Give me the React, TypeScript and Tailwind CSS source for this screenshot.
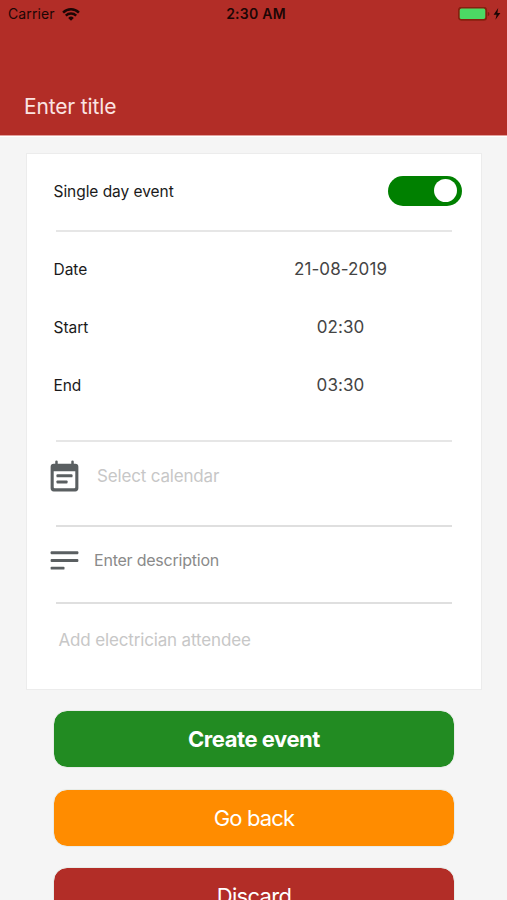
import clsx from "clsx";
import { useState } from "react";

const WifiIcon = () => (
  <svg className="h-[13px] w-[18px]" viewBox="0 0 18 13" fill="none">
    <path d="M1.1 4.6a11.2 11.2 0 0 1 15.8 0" stroke="#1c0605" strokeWidth="2.5" />
    <path d="M3.8 7.6a7.4 7.4 0 0 1 10.4 0" stroke="#1c0605" strokeWidth="2.4" />
    <path d="M6.2 9.9a4 4 0 0 1 5.6 0L9 12.7z" fill="#1c0605" />
  </svg>
);

const BatteryIcon = () => (
  <svg className="h-[14px] w-[43px]" viewBox="0 0 43 14">
    <rect x="0.8" y="0.6" width="27.4" height="12.2" rx="2.6" fill="#4cd964" stroke="#86200f" strokeWidth="1.8" />
    <path d="M29.8 5v4c1.2-.4 1.6-1.2 1.6-2s-.4-1.6-1.6-2z" fill="#7c1b12" />
    <path d="M40.2 1 35.6 7.8h3l-1.2 5L42.4 6h-3z" fill="#1c0605" />
  </svg>
);

const CalendarIcon = () => (
  <svg className="mt-px h-[37px] w-[37px] shrink-0" viewBox="0 0 24 24" fill="#5a5f61">
    <path
      fillRule="evenodd"
      d="M6 1.7a.8.8 0 0 1 1.6 0V3h8.8V1.7a.8.8 0 0 1 1.6 0V3h1a2 2 0 0 1 2 2v14a2 2 0 0 1-2 2H5a2 2 0 0 1-2-2V5a2 2 0 0 1 2-2h1zM5 8v10.3a.7.7 0 0 0 .7.7h12.6a.7.7 0 0 0 .7-.7V8z"
    />
    <rect x="6.8" y="9.9" width="10.4" height="2" rx="0.6" />
    <rect x="6.8" y="13.9" width="7.2" height="2" rx="0.6" />
  </svg>
);

const NotesIcon = () => (
  <svg className="h-[37px] w-[37px] shrink-0" viewBox="0 0 24 24" fill="#5a5f61">
    <rect x="3" y="6" width="18" height="1.9" rx="0.6" />
    <rect x="3" y="11" width="18" height="1.9" rx="0.6" />
    <rect x="3" y="16" width="9" height="1.9" rx="0.6" />
  </svg>
);

const StatusBar = () => (
  <div className="grid h-7 grid-cols-3 items-center pr-[6px] pl-2 text-sm text-[#1c0605]">
    <div className="flex items-center gap-[7px]">
      <span className="tracking-[0.1px]">Carrier</span>
      <WifiIcon />
    </div>
    <span className="pl-[3px] text-center font-semibold tracking-[0.25px]">2:30 AM</span>
    <div className="flex justify-end">
      <BatteryIcon />
    </div>
  </div>
);

const Divider = ({ thin = false }: { thin?: boolean }) => (
  <div className={clsx("mx-[29px] h-[2px]", thin ? "bg-[#dfdfdf]" : "bg-[#e6e6e6]")} />
);

interface FieldRowProps {
  label: string;
  value: string;
}

const FieldRow = ({ label, value }: FieldRowProps) => (
  <div className="flex h-[58px] items-center pl-[26.5px]">
    <span className="w-[173.5px] text-[15.5px] tracking-[-0.05px]">{label}</span>
    <span className="w-[227px] text-center text-[17px] tracking-[0.1px] text-[#444]">{value}</span>
  </div>
);

const fields: FieldRowProps[] = [
  { label: "Date", value: "21-08-2019" },
  { label: "Start", value: "02:30" },
  { label: "End", value: "03:30" },
];

const buttons = [
  { label: "Create event", style: "bg-[#228b22] font-bold tracking-[-0.45px]" },
  { label: "Go back", style: "bg-[#ff8c00] tracking-[-0.85px]" },
  { label: "Discard", style: "bg-[#b22d27] tracking-[-0.7px]" },
];

const App = () => {
  const [singleDay, setSingleDay] = useState(true);

  return (
    <div className="h-[900px] w-[507px] overflow-hidden bg-[#f5f5f5] font-['Inter',sans-serif] text-[#1a1a1a]">
      <header className="flex h-[136px] flex-col justify-between border-b border-[#e3a19d] bg-[#b22d27] shadow-[0_1px_0_#fff]">
        <StatusBar />
        <h1 className="pb-[14px] pl-6 text-[21px] leading-[28px] tracking-[-0.15px] text-[#fbe4e2]">
          Enter title
        </h1>
      </header>

      <main className="mt-[17px] mr-[25px] ml-[26px] border border-[#ececec] bg-white">
        <div className="flex h-[76px] items-center justify-between pr-[19px] pl-[26.5px]">
          <span className="text-[15.5px] tracking-[-0.05px]">Single day event</span>
          <button
            className={clsx(
              "mb-[3px] flex h-[30px] w-[74px] items-center rounded-full px-[5px]",
              singleDay ? "justify-end bg-[#008000]" : "justify-start bg-gray-300"
            )}
            onClick={() => setSingleDay(!singleDay)}
          >
            <span className="h-[23px] w-[23px] rounded-full bg-white" />
          </button>
        </div>
        <Divider />
        <div className="h-[208px] pt-[9px]">
          {fields.map((field) => (
            <FieldRow key={field.label} {...field} />
          ))}
        </div>
        <Divider />
        <div className="flex h-[83px] items-start pt-[16px] pl-[18.5px]">
          <CalendarIcon />
          <span className="pt-[6px] pl-[14.5px] text-[17px] leading-6 tracking-[-0.17px] text-[#c7c7c7]">
            Select calendar
          </span>
        </div>
        <Divider thin />
        <div className="flex h-[75px] items-start pt-[15px] pl-[18.5px]">
          <NotesIcon />
          <span className="pt-[6px] pl-[11.5px] text-base leading-6 tracking-[-0.22px] text-[#8a8a8a]">
            Enter description
          </span>
        </div>
        <Divider thin />
        <div className="h-[85px] pt-[24px] pl-[31.5px] text-[17px] leading-6 tracking-[-0.15px] text-[#c7c7c7]">
          Add electrician attendee
        </div>
      </main>

      <div className="mt-[20px] mr-[52px] ml-[53px] flex flex-col gap-[20.5px]">
        {buttons.map((button) => (
          <button
            key={button.label}
            className={clsx(
              "h-[58px] shrink-0 rounded-[14px] border border-[#e8ece8] bg-clip-padding pt-px text-[22px] text-white",
              button.style
            )}
          >
            {button.label}
          </button>
        ))}
      </div>
    </div>
  );
};

export default App;
